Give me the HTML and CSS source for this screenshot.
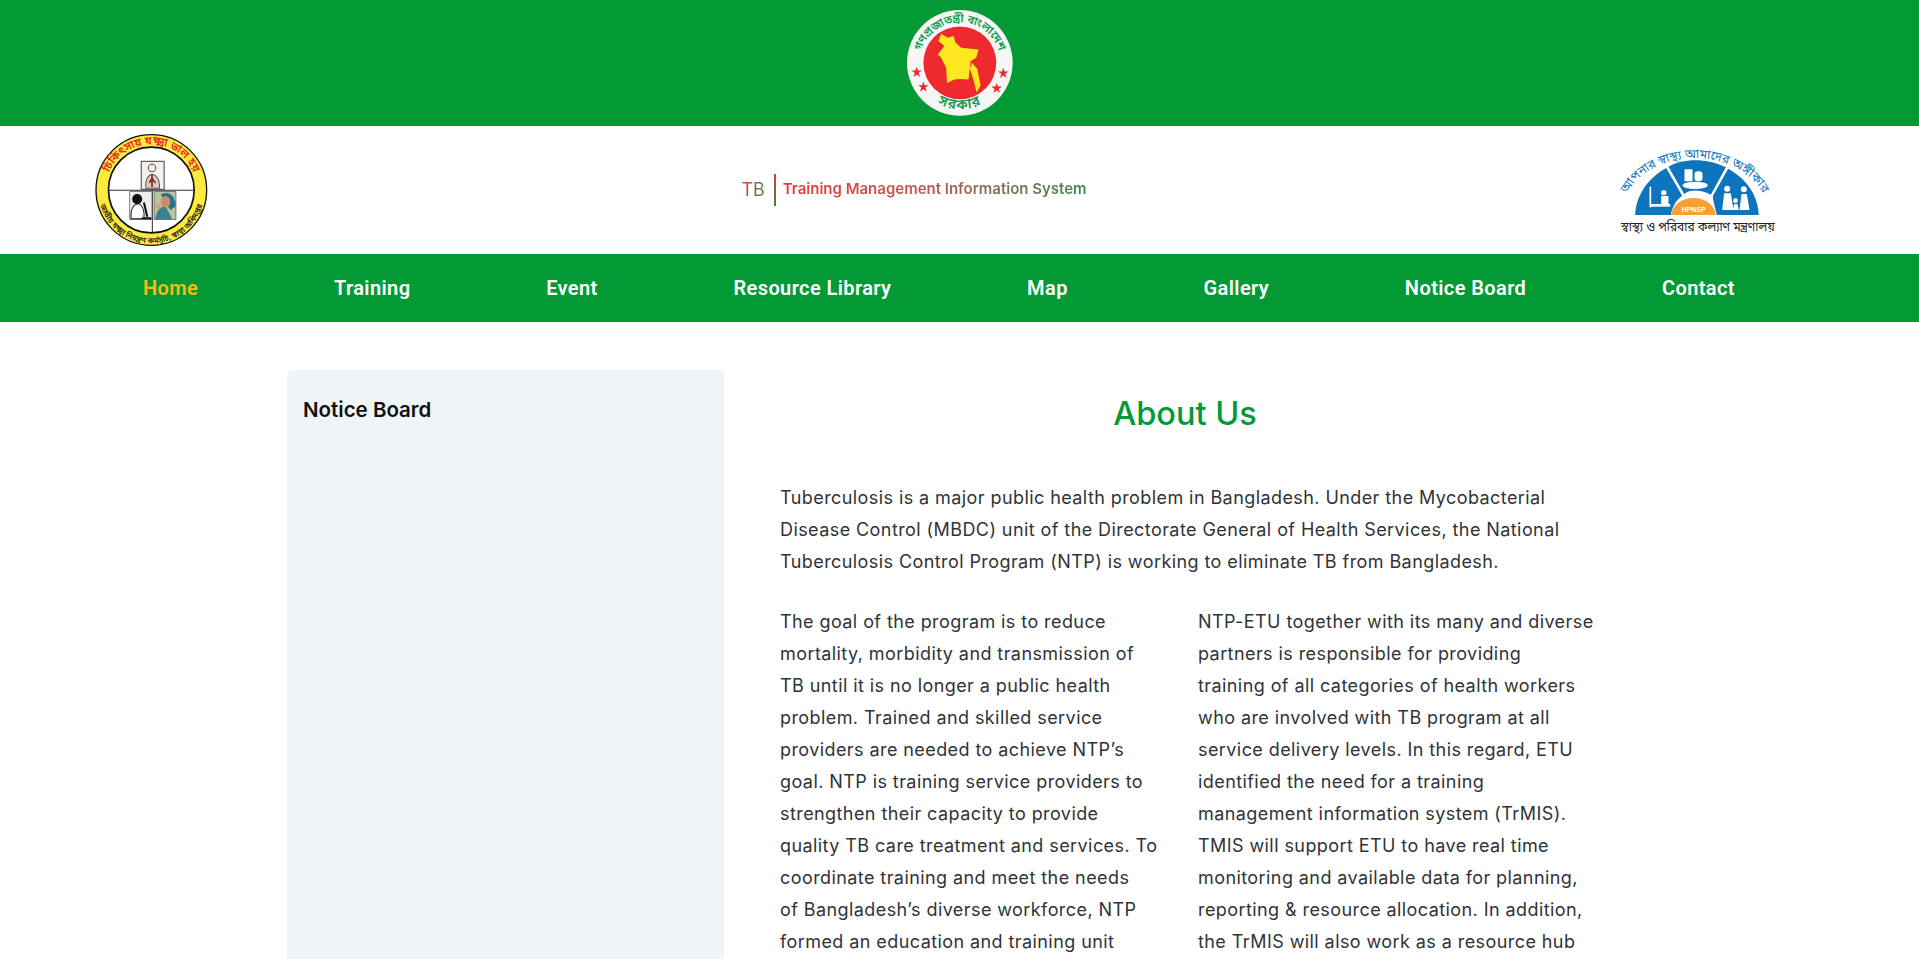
FILE: index.html
```html
<!DOCTYPE html>
<html lang="en">
<head>
<meta charset="UTF-8">
<meta name="viewport" content="width=device-width, initial-scale=1.0">
<title>TB Training Management Information System</title>
<link rel="stylesheet" href="styles.css">
</head>
<body>
<div class="shell">
    <div class="topbar">
        <svg class="gov-logo" viewBox="78 32 317 317" role="img" aria-label="Government of Bangladesh seal">
            <defs>
                <path id="govTop" d="M118 222 A122 122 0 1 1 354 222"/>
                <path id="govBottom" d="M130 280 A140 140 0 0 0 342 280"/>
            </defs>
            <circle cx="236" cy="190" r="158" fill="#f6f6f6"/>
            <circle cx="236" cy="190" r="109" fill="#ee2a2e"/>
            <path fill="#ffe81f" d="M180 103 L200 115 L218 110 L222 128 L240 145 L292 150 L285 175 L268 185 L262 240 L240 238 L220 240 L198 250 L195 205 L180 175 L170 165 L190 140 L172 125 Z"/>
            <path fill="#ffe81f" d="M272 190 L288 208 L298 258 L286 278 L278 245 L266 208 Z"/>
            <text class="seal-text" font-size="34"><textPath href="#govTop" startOffset="50%" text-anchor="middle">গণপ্রজাতন্ত্রী বাংলাদেশ</textPath></text>
            <text class="seal-text" font-size="42" letter-spacing="4"><textPath href="#govBottom" startOffset="50%" text-anchor="middle">সরকার</textPath></text>
            <g fill="#ee2a2e">
                <polygon points="107,202 111,213 123,213 113,220 117,232 107,225 97,232 101,220 91,213 103,213"/>
                <polygon points="127,246 131,257 143,257 133,264 137,276 127,269 117,276 121,264 111,257 123,257"/>
                <polygon points="366,205 370,216 382,216 372,223 376,235 366,228 356,235 360,223 350,216 362,216"/>
                <polygon points="346,250 350,261 362,261 352,268 356,280 346,273 336,280 340,268 330,261 342,261"/>
            </g>
        </svg>
    </div>

    <header class="brandbar">
        <svg class="tb-logo" viewBox="45 25 335 335" role="img" aria-label="National TB Control Programme logo">
            <defs>
                <path id="tbTop" d="M77 191 A135 135 0 0 1 347 191"/>
                <path id="tbBottom" d="M54 191 A158 158 0 0 0 370 191"/>
            </defs>
            <circle cx="212" cy="191" r="164" fill="#ffe93b" stroke="#111" stroke-width="4"/>
            <circle cx="212" cy="191" r="127" fill="#fff" stroke="#111" stroke-width="5"/>
            <path d="M85 192 H340 M215 192 V318" stroke="#333" stroke-width="3" fill="none"/>
            <text class="tb-red" font-size="33"><textPath href="#tbTop" startOffset="50%" text-anchor="middle">চিকিৎসায় যক্ষ্মা ভাল হয়</textPath></text>
            <text class="tb-dark" font-size="23"><textPath href="#tbBottom" startOffset="50%" text-anchor="middle">জাতীয় যক্ষ্মা নিয়ন্ত্রণ কর্মসূচি, স্বাস্থ্য অধিদপ্তর</textPath></text>
            <rect x="182" y="106" width="68" height="83" fill="#f4f1ec" stroke="#444" stroke-width="3"/>
            <circle cx="214" cy="126" r="11" fill="none" stroke="#555" stroke-width="3"/>
            <path d="M196 186 C193 160 204 145 214 145 C226 145 238 160 236 186 Z" fill="#d9cdc4" stroke="#555" stroke-width="3"/>
            <path d="M214 145 V182 M206 170 L214 156 L224 170" fill="none" stroke="#8a2a22" stroke-width="5"/>
            <rect x="148" y="196" width="66" height="82" fill="#eee" stroke="#444" stroke-width="2"/>
            <circle cx="170" cy="218" r="15" fill="#111"/>
            <path d="M152 276 C150 245 160 232 176 232 C190 240 192 262 190 276 Z" fill="#fff" stroke="#222" stroke-width="3"/>
            <path d="M190 228 L200 270 M184 275 H212" stroke="#111" stroke-width="6"/>
            <rect x="220" y="196" width="65" height="82" fill="#b9c4a6" stroke="#444" stroke-width="2"/>
            <path d="M224 278 C226 252 240 240 254 238 L274 278 Z" fill="#3c7f8f"/>
            <path d="M240 204 C266 192 284 210 284 240 L268 250 C258 232 248 218 240 204 Z" fill="#2d6f86"/>
            <ellipse cx="254" cy="226" rx="14" ry="17" fill="#c98f6a"/>
            <circle cx="233" cy="240" r="8" fill="#d9a07a"/>
        </svg>

        <div class="brand">
            <span class="brand-tb">TB</span>
            <span class="brand-bar"></span>
            <span class="brand-name">Training Management Information System</span>
        </div>

        <svg class="hp-logo" viewBox="60 45 470 270" role="img" aria-label="HPNSP logo">
            <defs>
                <path id="hpArc" d="M66 252 A218 168 0 0 1 502 252"/>
            </defs>
            <text class="hp-arc" font-size="37"><textPath href="#hpArc" startOffset="50%" text-anchor="middle">আপনার স্বাস্থ্য আমাদের অঙ্গীকার</textPath></text>
            <path fill="#0d74bd" d="M105 255 C108 190 150 140 198 114 L246 197 C228 210 216 230 212 255 Z"/>
            <path fill="#0d74bd" d="M205 110 C250 84 322 84 377 112 L332 194 C300 178 270 178 252 192 Z"/>
            <path fill="#0d74bd" d="M384 116 C440 147 473 195 476 255 L350 255 C345 232 338 212 338 198 Z"/>
            <path fill="#f6a132" d="M213 255 C216 225 245 204 280 204 C315 204 344 225 347 255 Z"/>
            <text class="hp-badge" x="280" y="245" font-size="21" text-anchor="middle">HPNSP</text>
            <g fill="#fff">
                <rect x="150" y="222" width="60" height="8"/>
                <circle cx="191" cy="188" r="8"/>
                <rect x="183" y="198" width="22" height="26"/>
                <rect x="148" y="170" width="5" height="62"/>
                <rect x="253" y="118" width="24" height="36" rx="3"/>
                <rect x="283" y="124" width="24" height="30" rx="10"/>
                <ellipse cx="285" cy="166" rx="38" ry="11"/>
                <circle cx="381" cy="176" r="9"/>
                <path d="M366 240 L372 190 H392 L400 240 Z"/>
                <circle cx="431" cy="178" r="9"/>
                <path d="M418 240 L424 192 H440 L448 240 Z"/>
                <circle cx="406" cy="212" r="7"/>
                <path d="M398 240 L402 222 H412 L416 240 Z"/>
            </g>
            <text class="hp-ministry" x="293" y="304" font-size="36" text-anchor="middle">স্বাস্থ্য ও পরিবার কল্যাণ মন্ত্রণালয়</text>
        </svg>
    </header>

    <nav class="mainnav">
        <a class="active" href="#">Home</a>
        <a href="#">Training</a>
        <a href="#">Event</a>
        <a href="#">Resource Library</a>
        <a href="#">Map</a>
        <a href="#">Gallery</a>
        <a href="#">Notice Board</a>
        <a href="#">Contact</a>
    </nav>

    <div class="content">
        <aside class="notice">
            <h3>Notice Board</h3>
        </aside>
        <main class="about">
            <h1>About Us</h1>
            <p class="intro">Tuberculosis is a major public health problem in Bangladesh. Under the Mycobacterial<br>
            Disease Control (MBDC) unit of the Directorate General of Health Services, the National<br>
            Tuberculosis Control Program (NTP) is working to eliminate TB from Bangladesh.</p>
            <div class="columns">
                <p>The goal of the program is to reduce<br>
                mortality, morbidity and transmission of<br>
                TB until it is no longer a public health<br>
                problem. Trained and skilled service<br>
                providers are needed to achieve NTP’s<br>
                goal. NTP is training service providers to<br>
                strengthen their capacity to provide<br>
                quality TB care treatment and services. To<br>
                coordinate training and meet the needs<br>
                of Bangladesh’s diverse workforce, NTP<br>
                formed an education and training unit</p>
                <p>NTP-ETU together with its many and diverse<br>
                partners is responsible for providing<br>
                training of all categories of health workers<br>
                who are involved with TB program at all<br>
                service delivery levels. In this regard, ETU<br>
                identified the need for a training<br>
                management information system (TrMIS).<br>
                TMIS will support ETU to have real time<br>
                monitoring and available data for planning,<br>
                reporting &amp; resource allocation. In addition,<br>
                the TrMIS will also work as a resource hub</p>
            </div>
        </main>
    </div>
</div>
</body>
</html>
```
FILE: styles.css
```css
* {
    box-sizing: border-box;
}
body {
    margin: 0;
    font-family: Inter, "Noto Sans", sans-serif;
    color: #2f3437;
    background-color: #fff;
}
.shell {
    display: flex;
    flex-direction: column;
    height: 100vh;
    overflow: hidden;
}

/* top green strip */
.topbar {
    display: flex;
    justify-content: center;
    align-items: center;
    flex: none;
    height: 126px;
    background-color: #039a36;
}
.gov-logo {
    width: 106px;
    height: 106px;
}
.seal-text {
    fill: #0c9a4c;
    font-family: "Noto Sans Bengali", "Noto Sans", sans-serif;
    font-weight: 600;
}

/* logos row */
.brandbar {
    display: flex;
    justify-content: space-between;
    align-items: center;
    flex: none;
    height: 128px;
    padding: 0 142px 0 95px;
}
.tb-logo {
    width: 113px;
    height: 113px;
}
.tb-red {
    fill: #e3262b;
    font-family: "Noto Sans Bengali", "Noto Sans", sans-serif;
    font-weight: 600;
}
.tb-dark {
    fill: #222;
    font-family: "Noto Sans Bengali", "Noto Sans", sans-serif;
    font-weight: 600;
}
.hp-logo {
    width: 157px;
    height: 90px;
    overflow: visible;
}
.hp-arc {
    fill: #0d74bd;
    font-family: "Noto Sans Bengali", "Noto Sans", sans-serif;
}
.hp-ministry {
    fill: #222;
    font-family: "Noto Sans Bengali", "Noto Sans", sans-serif;
}
.hp-badge {
    fill: #fff;
    font-family: "Liberation Sans", sans-serif;
    font-weight: 700;
}
.brand {
    display: flex;
    align-items: center;
}
.brand-tb {
    margin-right: 9px;
    padding-bottom: 1px;
    font-size: 18px;
    background: linear-gradient(90deg, #e5383b, #4b8a58);
    -webkit-background-clip: text;
    background-clip: text;
    color: transparent;
}
.brand-bar {
    width: 2px;
    height: 32px;
    margin-right: 7px;
    background: linear-gradient(180deg, #e5383b, #2f8a4a);
}
.brand-name {
    padding-bottom: 3px;
    font-size: 15px;
    font-weight: 600;
    background: linear-gradient(90deg, #e5383b, #c9544f 40%, #3f8a55);
    -webkit-background-clip: text;
    background-clip: text;
    color: transparent;
}

/* menu */
.mainnav {
    display: flex;
    justify-content: space-between;
    align-items: center;
    flex: none;
    height: 68px;
    padding: 0 184px 0 143px;
    background-color: #039a36;
}
.mainnav a {
    font-family: Roboto, sans-serif;
    font-size: 20px;
    font-weight: 600;
    letter-spacing: 0.4px;
    color: #fff;
    text-decoration: none;
}
.mainnav a.active {
    color: #fdb913;
}

/* page body */
.content {
    display: flex;
    flex: 1;
    gap: 56px;
    min-height: 0;
    padding: 48px 329px 0 287px;
}
.notice {
    flex: none;
    width: 437px;
    padding: 27px 16px;
    background-color: #f0f4f7;
    border-radius: 6px 6px 0 0;
}
.notice h3 {
    margin: 0;
    font-size: 20.5px;
    line-height: 26px;
    font-weight: 600;
    color: #111;
}
.about {
    flex: 1;
    min-width: 0;
}
.about h1 {
    margin: 21px 0 45px;
    font-size: 32.5px;
    line-height: 46px;
    font-weight: 500;
    text-align: center;
    color: #039a36;
}
.about p {
    margin: 0;
    font-size: 18px;
    line-height: 32px;
    letter-spacing: 0.42px;
    white-space: nowrap;
}
.columns {
    display: grid;
    grid-template-columns: 390px 1fr;
    column-gap: 28px;
    margin-top: 28px;
}
```
